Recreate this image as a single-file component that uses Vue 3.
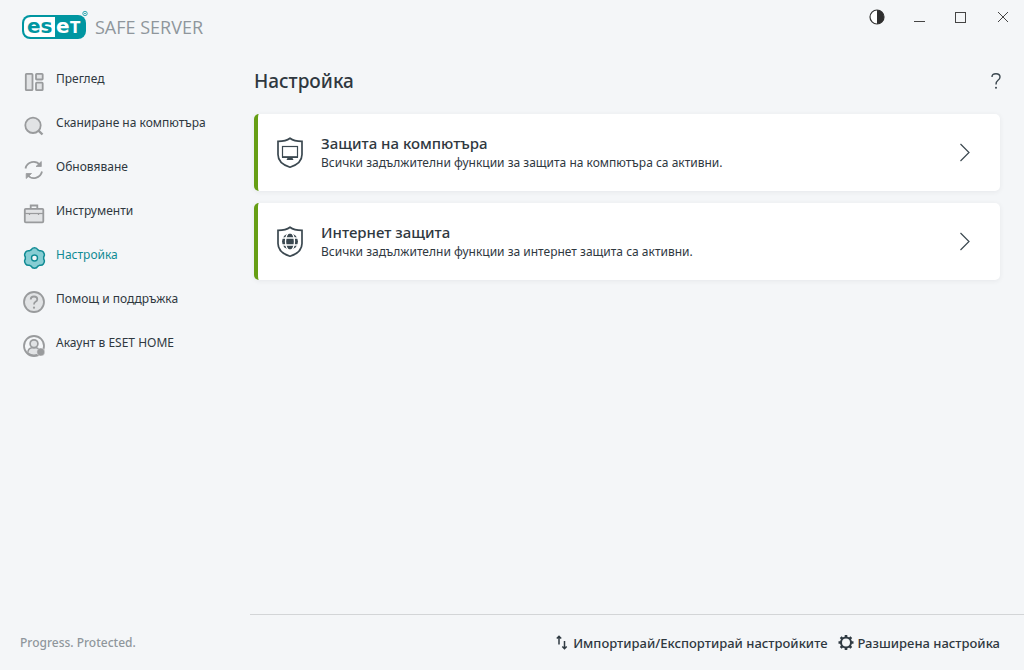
<script setup>
import { ref } from 'vue'

const active = ref('setup')

const items = [
  { id: 'overview', label: 'Преглед' },
  { id: 'scan', label: 'Сканиране на компютъра' },
  { id: 'update', label: 'Обновяване' },
  { id: 'tools', label: 'Инструменти' },
  { id: 'setup', label: 'Настройка' },
  { id: 'help', label: 'Помощ и поддръжка' },
  { id: 'account', label: 'Акаунт в ESET HOME' },
]

const cards = [
  {
    id: 'computer',
    title: 'Защита на компютъра',
    text: 'Всички задължителни функции за защита на компютъра са активни.',
  },
  {
    id: 'internet',
    title: 'Интернет защита',
    text: 'Всички задължителни функции за интернет защита са активни.',
  },
]
</script>

<template>
  <div class="window">
    <header class="titlebar">
      <div class="brand">
        <svg class="logo" width="68" height="32" viewBox="0 0 68 32" role="img" aria-label="ESET">
          <rect x="1" y="5" width="64" height="24" rx="8" fill="#0096a1" />
          <path d="M34 7H10Q3 7 3 14V20Q3 27 10 27H34Z" fill="#fff" />
          <text class="mark" x="6" y="23" fill="#0096a1">es</text>
          <text class="mark" x="35" y="23" fill="#fff">e</text>
          <text class="mark mark-small" x="49" y="23" fill="#fff">T</text>
          <circle cx="64" cy="3.500" r="2.200" fill="none" stroke="#0096a1" stroke-width=".8" />
          <circle cx="64" cy="3.500" r=".8" fill="#0096a1" />
        </svg>
        <span class="product">SAFE SERVER</span>
      </div>
      <div class="controls">
        <button type="button" aria-label="Контраст">
          <svg width="16" height="16" viewBox="0 0 16 16"><circle cx="8" cy="8" r="7" fill="#fff" stroke="#333" stroke-width="1.200" /><path d="M8 1A7 7 0 0 1 8 15Z" fill="#2e2e2e" /></svg>
        </button>
        <button type="button" aria-label="Минимизиране">
          <svg width="16" height="16" viewBox="0 0 16 16"><path d="M3 12.500H14" stroke="#444" /></svg>
        </button>
        <button type="button" aria-label="Максимизиране">
          <svg width="16" height="16" viewBox="0 0 16 16"><rect x="2.500" y="3.500" width="10" height="10" fill="none" stroke="#444" /></svg>
        </button>
        <button type="button" aria-label="Затваряне">
          <svg width="16" height="16" viewBox="0 0 16 16"><path d="M3 3L13 13M13 3L3 13" stroke="#444" /></svg>
        </button>
      </div>
    </header>

    <aside class="sidebar">
      <nav>
        <button
          v-for="item in items"
          :key="item.id"
          type="button"
          class="nav-item"
          :class="{ active: active === item.id }"
          @click="active = item.id"
        >
          <svg class="nav-icon" width="24" height="24" viewBox="0 0 24 24" fill="none" stroke="#999b9d" stroke-width="1.800">
            <g v-if="item.id === 'overview'" fill="#e1e3e5">
              <rect x="3.800" y="3.800" width="6.700" height="16.400" rx=".7" />
              <rect x="14" y="3.800" width="6.700" height="5.700" rx=".7" />
              <rect x="14" y="12.700" width="6.700" height="7.500" rx=".7" />
            </g>
            <g v-else-if="item.id === 'scan'">
              <circle cx="11" cy="11.300" r="7.700" fill="#e1e3e5" />
              <path d="M16.500 16.700L20.500 20.500" stroke-width="2.400" />
            </g>
            <g v-else-if="item.id === 'update'">
              <path d="M3.500 10.500A8.300 8.300 0 0 1 18 7M20 13.500A8.300 8.300 0 0 1 5.500 17" />
              <path d="M19.300 3.500V8.500H14ZM4.200 20.500V15.500H9.500Z" fill="#999b9d" stroke-width=".8" />
            </g>
            <g v-else-if="item.id === 'tools'">
              <rect x="2.800" y="6.800" width="18.500" height="13.500" rx="1" fill="#e1e3e5" />
              <path d="M8.700 6.500V3.500H15.300V6.500" />
              <path d="M3 11.500H21" stroke-width="1.200" />
              <path d="M7.500 11V13M16.500 11V13" stroke-width="1.200" />
            </g>
            <g v-else-if="item.id === 'setup'" stroke="#108b94">
              <path
                d="M9.300 3.700Q10 1.700 12.500 1.700Q15 1.700 15.700 3.700L17.600 4.800Q20 4.200 21.500 6.300Q23.200 9 21.700 10.700V13.300Q23.200 15 21.500 17.700Q20 19.800 17.600 19.200L15.700 20.300Q15 22.300 12.500 22.300Q10 22.300 9.300 20.300L7.400 19.200Q5 19.800 3.500 17.700Q1.800 15 3.300 13.300V10.700Q1.800 9 3.500 6.300Q5 4.200 7.400 4.800Z"
                fill="#87cdd3"
                stroke-width="1.500"
              />
              <circle cx="12.500" cy="12" r="3" fill="#f4f6f8" stroke-width="1.400" />
            </g>
            <g v-else-if="item.id === 'help'">
              <circle cx="12" cy="12" r="10" fill="#e1e3e5" />
              <path d="M8.700 9.500Q8.700 6.500 12 6.500Q15.300 6.500 15.300 9.200Q15.300 10.800 13.500 11.800Q12 12.600 12 14.500" />
              <circle cx="12" cy="17.700" r="1.100" fill="#999b9d" stroke="none" />
            </g>
            <g v-else>
              <circle cx="12" cy="12" r="10" />
              <path d="M5.800 19Q6 14.500 9.700 13.800H14.300Q18 14.500 18.200 19Q12 23.500 5.800 19Z" fill="#e1e3e5" stroke-width="1.400" />
              <circle cx="12" cy="9.700" r="3.900" fill="#e1e3e5" stroke-width="1.700" />
              <circle cx="18.800" cy="18" r="4" fill="#999b9d" stroke="#f4f6f8" stroke-width=".4" />
            </g>
          </svg>
          <span>{{ item.label }}</span>
        </button>
      </nav>
    </aside>

    <main class="content">
      <div class="heading">
        <h1>Настройка</h1>
        <button type="button" class="help" aria-label="Помощ">
          <svg width="12" height="18" viewBox="0 0 12 18">
            <path d="M2 5Q2 1.700 6 1.700Q10 1.700 10 5Q10 6.800 8 8.300Q6 9.800 6 12.500" fill="none" stroke="#3b474f" stroke-width="1.400" />
            <circle cx="6" cy="15.700" r="1" fill="#3b474f" />
          </svg>
        </button>
      </div>
      <button v-for="card in cards" :key="card.id" type="button" class="card">
        <svg class="shield" width="28" height="32" viewBox="0 0 28 32" fill="none" stroke="#3b4850">
          <path d="M14 1.200Q18 4.200 26 4.400V17.500Q26 26.500 14 30.200Q2 26.500 2 17.500V4.400Q10 4.200 14 1.200Z" stroke-width="1.700" />
          <g v-if="card.id === 'computer'">
            <rect x="6.500" y="9.500" width="15" height="10.500" stroke-width="1.200" />
            <path d="M6 20.200H22" stroke-width="1.600" />
            <path d="M10.500 23H17.500L16.500 21H11.500Z" fill="#3b4850" stroke="none" />
          </g>
          <g v-else>
            <circle cx="14" cy="15.500" r="8" fill="#3b4850" stroke="none" />
            <ellipse cx="14" cy="15.500" rx="4.500" ry="9" stroke="#fff" stroke-width="1.300" />
            <path d="M5 12H23M5 19H23" stroke="#fff" stroke-width="1.300" />
          </g>
        </svg>
        <span class="card-text">
          <span class="card-title">{{ card.title }}</span>
          <span class="card-desc">{{ card.text }}</span>
        </span>
        <svg class="chevron" width="12" height="20" viewBox="0 0 12 20" fill="none" stroke="#3b4850" stroke-width="1.200">
          <path d="M1.500 1L10 9.500L1.500 18" />
        </svg>
      </button>
    </main>

    <p class="tagline">Progress. Protected.</p>
    <footer class="actions">
      <button type="button" class="action">
        <svg width="14" height="16" viewBox="0 0 14 16" fill="none" stroke="#2f3a42" stroke-width="1.500">
          <path d="M4 9.500V1.500M1.800 3.500L4 1.300L6.200 3.500M9.500 6V13.500M7.300 11.500L9.500 13.700L11.700 11.500" />
        </svg>
        Импортирай/Експортирай настройките
      </button>
      <button type="button" class="action">
        <svg width="16" height="16" viewBox="0 0 16 16" fill="none" stroke="#2f3a42">
          <circle cx="8" cy="7.500" r="5" stroke-width="2" />
          <path d="M8 0V2.500M8 12.500V15M.5 7.500H3M13 7.500H15.500M2.700 2.200L4.500 4M11.500 11L13.300 12.800M2.700 12.800L4.500 11M11.500 4L13.300 2.200" stroke-width="2.600" />
        </svg>
        Разширена настройка
      </button>
    </footer>
  </div>
</template>

<style>
body {
  margin: 0;
  background: #f4f6f8;
}
</style>

<style scoped>
.window {
  box-sizing: border-box;
  min-height: 100vh;
  display: grid;
  grid-template-columns: 250px 1fr;
  grid-template-rows: 57px 1fr 56px;
  background: #f4f6f8;
  color: #2f383f;
  font-family: "Noto Sans", "Open Sans", sans-serif;
  font-size: 12px;
}
button {
  border: 0;
  padding: 0;
  background: none;
  color: inherit;
  font: inherit;
  text-align: left;
  cursor: pointer;
}
svg {
  display: block;
  flex: none;
}
.titlebar {
  grid-column: 1 / -1;
  display: flex;
  justify-content: space-between;
  align-items: flex-start;
}
.brand {
  display: flex;
  align-items: flex-start;
  gap: 6px;
  padding: 10px 0 0 21px;
}
.mark {
  font-family: "DejaVu Sans", sans-serif;
  font-size: 20px;
  font-weight: 700;
}
.mark-small {
  font-size: 15px;
}
.product {
  color: #8f969c;
  font-family: "Open Sans", sans-serif;
  font-size: 18px;
  line-height: 34px;
}
.controls {
  display: flex;
  gap: 26px;
  padding: 9px 13px 0 0;
}
.nav-item {
  display: flex;
  align-items: center;
  gap: 10px;
  width: 100%;
  height: 44px;
  padding: 0 0 2px 22px;
}
.nav-icon {
  margin-top: 8px;
}
.nav-item.active {
  color: #108b94;
}
.content {
  display: flex;
  flex-direction: column;
  gap: 12px;
  padding: 5px 24px 0 4px;
}
.heading {
  display: flex;
  justify-content: space-between;
  align-items: center;
  height: 38px;
  margin-bottom: 2px;
}
.heading h1 {
  margin: 0;
  font-size: 19px;
  font-weight: 500;
  line-height: 28px;
}
.help {
  margin-right: -2px;
}
.card {
  display: flex;
  align-items: center;
  min-height: 77px;
  padding: 0 29px 0 18px;
  border-left: 4px solid #669e14;
  border-radius: 5px;
  background: #fff;
  box-shadow: 0 1px 5px rgba(60, 70, 80, 0.08);
}
.card-text {
  flex: 1;
  display: flex;
  flex-direction: column;
  padding: 0 0 0 17px;
}
.card-title {
  font-size: 15px;
  font-weight: 500;
  line-height: 20px;
}
.card-desc {
  font-size: 12px;
  line-height: 19px;
}
.tagline {
  margin: 0;
  padding: 0 0 0 20px;
  color: #8f969c;
  font-size: 12px;
  font-weight: 500;
  line-height: 58px;
}
.actions {
  display: flex;
  justify-content: flex-end;
  align-items: center;
  flex-wrap: wrap;
  gap: 10px;
  padding-right: 24px;
  border-top: 1px solid #d3d5d7;
}
.action {
  display: flex;
  align-items: center;
  gap: 4px;
  font-size: 13px;
  font-weight: 500;
  line-height: 20px;
}
</style>
